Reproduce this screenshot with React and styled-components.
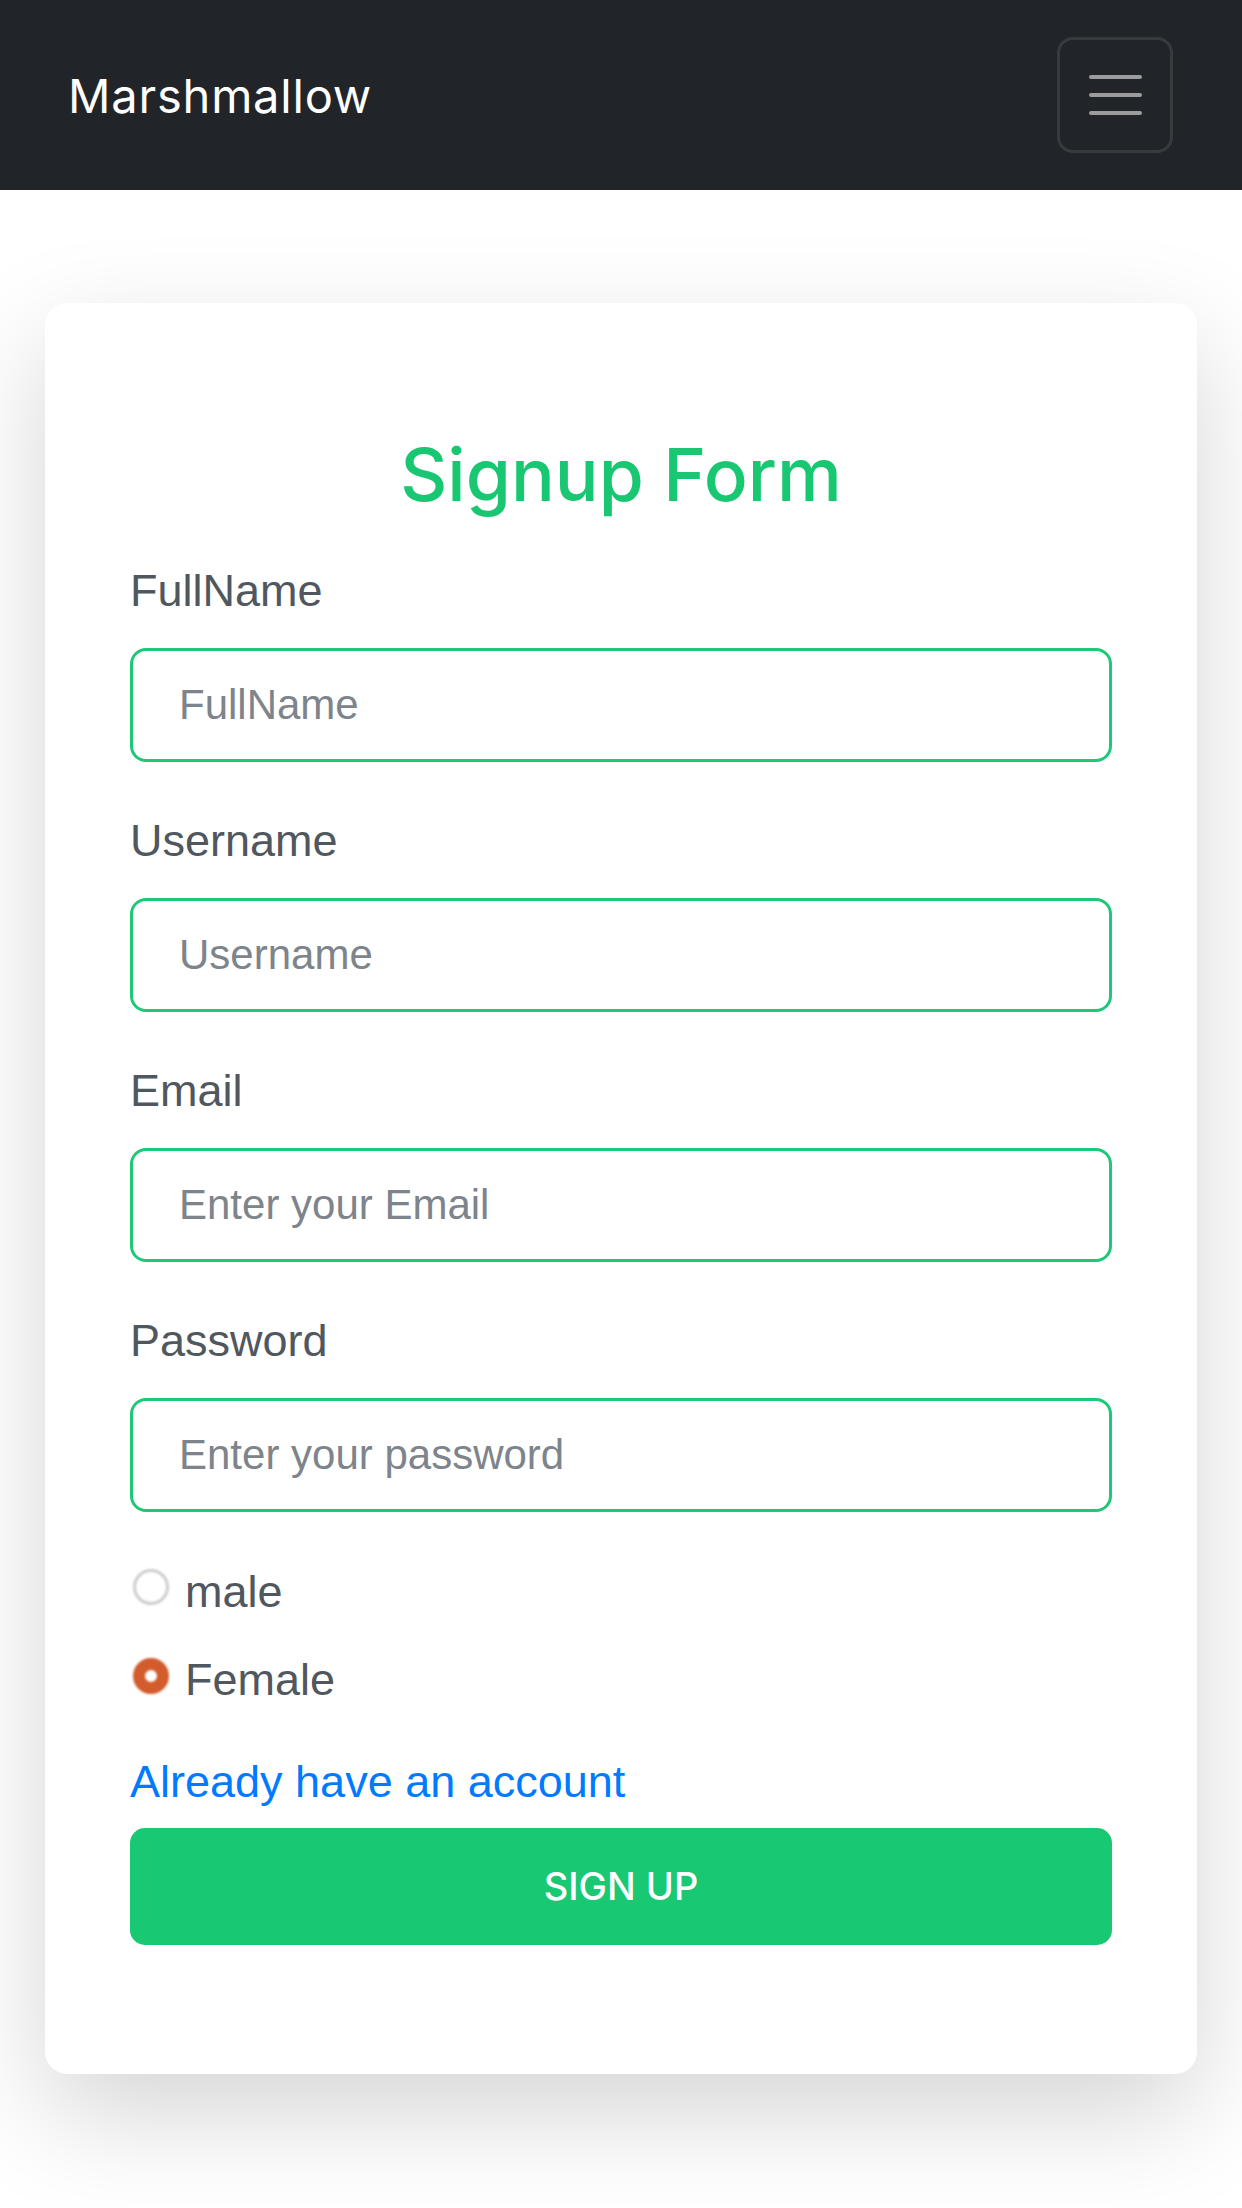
import React from 'react';
import styled, { createGlobalStyle } from 'styled-components';

const GlobalStyle = createGlobalStyle`
    body {
        margin: 0;
        background: #ffffff;
        font-family: "Liberation Sans", Arial, sans-serif;
    }
`

const Navbar = styled.nav`
    height: 190px;
    background: #212529;
    display: flex;
    align-items: center;
    justify-content: space-between;
    padding: 0 69px 0 68px;
`

const Brand = styled.a`
    font-family: Inter, "Noto Sans", sans-serif;
    font-size: 47px;
    font-weight: 400;
    color: #ffffff;
    text-decoration: none;
    letter-spacing: 0.8px;
`

const Toggler = styled.button`
    width: 116px;
    height: 116px;
    box-sizing: border-box;
    background: transparent;
    border: 3px solid rgba(255, 255, 255, 0.1);
    border-radius: 16px;
    display: flex;
    flex-direction: column;
    align-items: center;
    justify-content: center;
    gap: 14px;
    padding: 0;
`

const TogglerBar = styled.span`
    width: 53px;
    height: 4px;
    border-radius: 2px;
    background: rgba(255, 255, 255, 0.55);
`

const Main = styled.main`
    padding: 113px 45px 160px;
`

const Card = styled.div`
    background: #ffffff;
    border-radius: 22px;
    box-shadow: 0 40px 110px rgba(0, 0, 0, 0.17);
    padding: 127px 85px 129px;
`

const Title = styled.h2`
    margin: 0 0 36.5px;
    font-family: Inter, "Noto Sans", sans-serif;
    font-size: 73px;
    font-weight: 500;
    line-height: 90px;
    color: #19c773;
    text-align: center;
`

const FormGroup = styled.div`
    margin-bottom: ${props => props.last ? '46px' : '45px'};
`

const Label = styled.label`
    display: block;
    font-size: 45px;
    line-height: 67.5px;
    color: #50575e;
    margin-bottom: 23.5px;
`

const Input = styled.input`
    display: block;
    width: 100%;
    height: 114px;
    box-sizing: border-box;
    border: 3px solid #1dc877;
    border-radius: 16px;
    padding: 0 46px;
    font-family: "Liberation Sans", Arial, sans-serif;
    font-size: 42px;
    color: #495057;
    outline: none;
    background: #ffffff;

    &::placeholder {
        color: #7d848b;
    }
`

const RadioRow = styled.label`
    display: flex;
    align-items: center;
    gap: 16px;
    font-size: 45px;
    line-height: 67.5px;
    color: #50575e;
    margin-bottom: ${props => props.last ? '34.5px' : '21px'};
`

const RadioDot = styled.span`
    width: 36px;
    height: 36px;
    box-sizing: border-box;
    border-radius: 50%;
    flex-shrink: 0;
    margin: -8px 0 0 3px;
    filter: blur(1.2px);
    background: #ffffff;
    border: ${props => props.checked ? '12px solid #d35c2d' : '3.5px solid #cdcdcd'};
`

const LoginLink = styled.a`
    display: block;
    font-size: 45px;
    line-height: 67.5px;
    color: #007bff;
    text-decoration: none;
    margin-bottom: 12px;
`

const SubmitButton = styled.button`
    display: block;
    width: 100%;
    height: 117px;
    border: none;
    border-radius: 15px;
    background: #18c873;
    color: #ffffff;
    font-family: Inter, "Noto Sans", sans-serif;
    font-size: 38px;
    font-weight: 500;
    text-transform: uppercase;
`

const fields = [
    { label: 'FullName', placeholder: 'FullName', type: 'text' },
    { label: 'Username', placeholder: 'Username', type: 'text' },
    { label: 'Email', placeholder: 'Enter your Email', type: 'email' },
    { label: 'Password', placeholder: 'Enter your password', type: 'password' },
];

function App() 
{
    return(
        <>
            <GlobalStyle />
            <Navbar>
                <Brand href="#">Marshmallow</Brand>
                <Toggler aria-label="Toggle navigation">
                    <TogglerBar />
                    <TogglerBar />
                    <TogglerBar />
                </Toggler>
            </Navbar>
            <Main>
                <Card>
                    <Title>Signup Form</Title>
                    {fields.map((f, i) => (
                        <FormGroup key={f.label} last={i === fields.length - 1}>
                            <Label>{f.label}</Label>
                            <Input type={f.type} placeholder={f.placeholder} />
                        </FormGroup>
                    ))}
                    <RadioRow>
                        <RadioDot />
                        male
                    </RadioRow>
                    <RadioRow last>
                        <RadioDot checked />
                        Female
                    </RadioRow>
                    <LoginLink href="#">Already have an account</LoginLink>
                    <SubmitButton>Sign up</SubmitButton>
                </Card>
            </Main>
        </>
    );
}

export default App;
